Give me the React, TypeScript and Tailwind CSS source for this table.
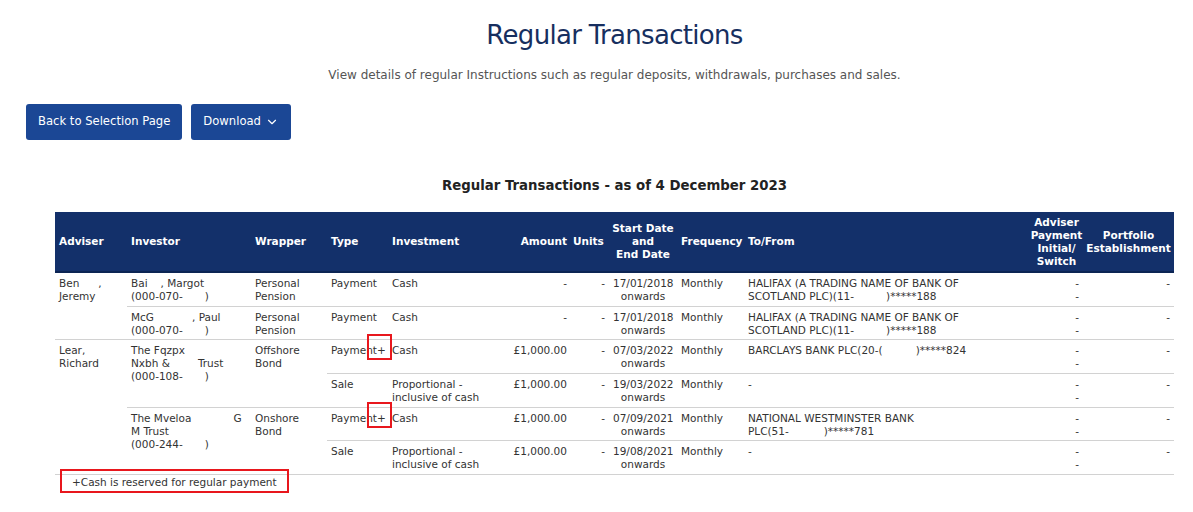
import React from 'react';
import { ChevronDown } from 'lucide-react';

type Row = {
  adviser?: { lines: React.ReactNode[]; span: number };
  investor?: { lines: React.ReactNode[]; span: number };
  wrapper?: { lines: string[]; span: number };
  type: string;
  flagged?: boolean;
  investment: string[];
  amount: string;
  start: string;
  toFrom: React.ReactNode[];
};

const Gap = ({ w }: { w: string }) => <span className={`inline-block ${w}`} />;

const rows: Row[] = [
  {
    adviser: { lines: [<>Ben<Gap w="w-[19px]" />,</>, 'Jeremy'], span: 2 },
    investor: { lines: [<>Bai<Gap w="w-[13px]" />, Margot</>, <>(000-070-<Gap w="w-[22px]" />)</>], span: 1 },
    wrapper: { lines: ['Personal', 'Pension'], span: 1 },
    type: 'Payment',
    investment: ['Cash'],
    amount: '-',
    start: '17/01/2018',
    toFrom: ['HALIFAX (A TRADING NAME OF BANK OF', <>SCOTLAND PLC)(11-<Gap w="w-[32px]" />)*****188</>],
  },
  {
    investor: { lines: [<>McG<Gap w="w-[38px]" />, Paul</>, <>(000-070-<Gap w="w-[22px]" />)</>], span: 1 },
    wrapper: { lines: ['Personal', 'Pension'], span: 1 },
    type: 'Payment',
    investment: ['Cash'],
    amount: '-',
    start: '17/01/2018',
    toFrom: ['HALIFAX (A TRADING NAME OF BANK OF', <>SCOTLAND PLC)(11-<Gap w="w-[32px]" />)*****188</>],
  },
  {
    adviser: { lines: ['Lear,', 'Richard'], span: 4 },
    investor: { lines: ['The Fqzpx', <>Nxbh &amp;<Gap w="w-[28px]" />Trust</>, <>(000-108-<Gap w="w-[22px]" />)</>], span: 2 },
    wrapper: { lines: ['Offshore', 'Bond'], span: 2 },
    type: 'Payment',
    flagged: true,
    investment: ['Cash'],
    amount: '£1,000.00',
    start: '07/03/2022',
    toFrom: [<>BARCLAYS BANK PLC(20-(<Gap w="w-[33px]" />)*****824</>],
  },
  {
    type: 'Sale',
    investment: ['Proportional -', 'inclusive of cash'],
    amount: '£1,000.00',
    start: '19/03/2022',
    toFrom: ['-'],
  },
  {
    investor: { lines: [<>The Mveloa<Gap w="w-[42px]" />G</>, 'M Trust', <>(000-244-<Gap w="w-[22px]" />)</>], span: 2 },
    wrapper: { lines: ['Onshore', 'Bond'], span: 2 },
    type: 'Payment',
    flagged: true,
    investment: ['Cash'],
    amount: '£1,000.00',
    start: '07/09/2021',
    toFrom: ['NATIONAL WESTMINSTER BANK', <>PLC(51-<Gap w="w-[35px]" />)*****781</>],
  },
  {
    type: 'Sale',
    investment: ['Proportional -', 'inclusive of cash'],
    amount: '£1,000.00',
    start: '19/08/2021',
    toFrom: ['-'],
  },
];

const td = 'px-[4px] pt-[4px] pb-[2.7px] align-top border-b border-[#d2d2d2]';

const Lines = ({ lines }: { lines: React.ReactNode[] }) => (
  <>
    {lines.map((l, i) => (
      <div key={i} className="whitespace-nowrap">{l}</div>
    ))}
  </>
);

export default function App() {
  return (
    <div className="min-h-[512px] bg-white font-['DejaVu_Sans',sans-serif] text-[#333]">
      {/* Page heading */}
      <div className="pl-[55px] pr-[19px] pt-[20px] text-center">
        <h1 className="text-[26px] leading-[30px] tracking-[-0.7px] text-[#172f5f]">Regular Transactions</h1>
        <p className="mt-[18px] text-[12px] leading-[14px] text-[#555]">
          View details of regular Instructions such as regular deposits, withdrawals, purchases and sales.
        </p>
      </div>

      {/* Actions */}
      <div className="flex gap-[9px] pl-[26px] pt-[22px]">
        <button className="h-[36px] rounded-[3px] bg-[#1b4795] px-[12px] text-[11.6px] text-white">
          Back to Selection Page
        </button>
        <button className="flex h-[36px] items-center gap-[4px] rounded-[3px] bg-[#1b4795] px-[12px] text-[11.6px] text-white">
          Download
          <ChevronDown size={14} strokeWidth={2} />
        </button>
      </div>

      <div className="pl-[55px] pr-[19px]">
        <h2 className="mt-[38px] text-center text-[13.3px] font-bold leading-[16px] text-[#222]">
          Regular Transactions - as of 4 December 2023
        </h2>

        <table className="mt-[18px] w-[1119px] table-fixed border-collapse text-[10.5px] leading-[13px] text-[#333]">
          <colgroup>
            <col className="w-[72px]" />
            <col className="w-[124px]" />
            <col className="w-[76px]" />
            <col className="w-[61px]" />
            <col className="w-[112px]" />
            <col className="w-[71px]" />
            <col className="w-[38px]" />
            <col className="w-[68px]" />
            <col className="w-[67px]" />
            <col className="w-[286px]" />
            <col className="w-[53px]" />
            <col className="w-[91px]" />
          </colgroup>
          <thead>
            <tr className="h-[60px] bg-[#13306a] text-white font-bold border-b-2 border-[#0c2554]">
              <th className="px-[4px] text-left">Adviser</th>
              <th className="px-[4px] text-left">Investor</th>
              <th className="px-[4px] text-left">Wrapper</th>
              <th className="px-[4px] text-left">Type</th>
              <th className="px-[4px] text-left">Investment</th>
              <th className="px-[4px] text-right">Amount</th>
              <th className="px-[2px] text-left">Units</th>
              <th className="px-[2px] text-center">Start Date<br />and<br />End Date</th>
              <th className="px-[4px] text-left">Frequency</th>
              <th className="px-[4px] text-left">To/From</th>
              <th className="px-[0px] text-center">Adviser<br />Payment<br />Initial/<br />Switch</th>
              <th className="px-[2px] text-center">Portfolio<br />Establishment</th>
            </tr>
          </thead>
          <tbody>
            {rows.map((r, i) => (
              <tr key={i}>
                {r.adviser && (
                  <td rowSpan={r.adviser.span} className={td}>
                    <Lines lines={r.adviser.lines} />
                  </td>
                )}
                {r.investor && (
                  <td rowSpan={r.investor.span} className={td}>
                    <Lines lines={r.investor.lines} />
                  </td>
                )}
                {r.wrapper && (
                  <td rowSpan={r.wrapper.span} className={td}>
                    <Lines lines={r.wrapper.lines} />
                  </td>
                )}
                <td className={td}>
                  {r.type}
                  {r.flagged && (
                    <span className="relative">
                      +
                      <span className="absolute -left-[10px] -right-[6px] -top-[10px] -bottom-[4px] border-2 border-[#e8171d]" />
                    </span>
                  )}
                </td>
                <td className={td}>
                  <Lines lines={r.investment} />
                </td>
                <td className={`${td} text-right`}>{r.amount}</td>
                <td className={`${td} text-right`}>-</td>
                <td className={`${td} text-center`}>
                  <div>{r.start}</div>
                  <div>onwards</div>
                </td>
                <td className={td}>Monthly</td>
                <td className={td}>
                  <Lines lines={r.toFrom} />
                </td>
                <td className={`${td} text-right`}>
                  <div>-</div>
                  <div>-</div>
                </td>
                <td className={`${td} text-right`}>-</td>
              </tr>
            ))}
          </tbody>
        </table>

        {/* Footnote */}
        <div className="relative pl-[17px] pt-[1px] text-[10.5px] leading-[13px] text-[#333]">
          +Cash is reserved for regular payment
          <span className="absolute left-[5px] top-[-6px] h-[24px] w-[229px] border-2 border-[#e8171d]" />
        </div>
      </div>
    </div>
  );
}
